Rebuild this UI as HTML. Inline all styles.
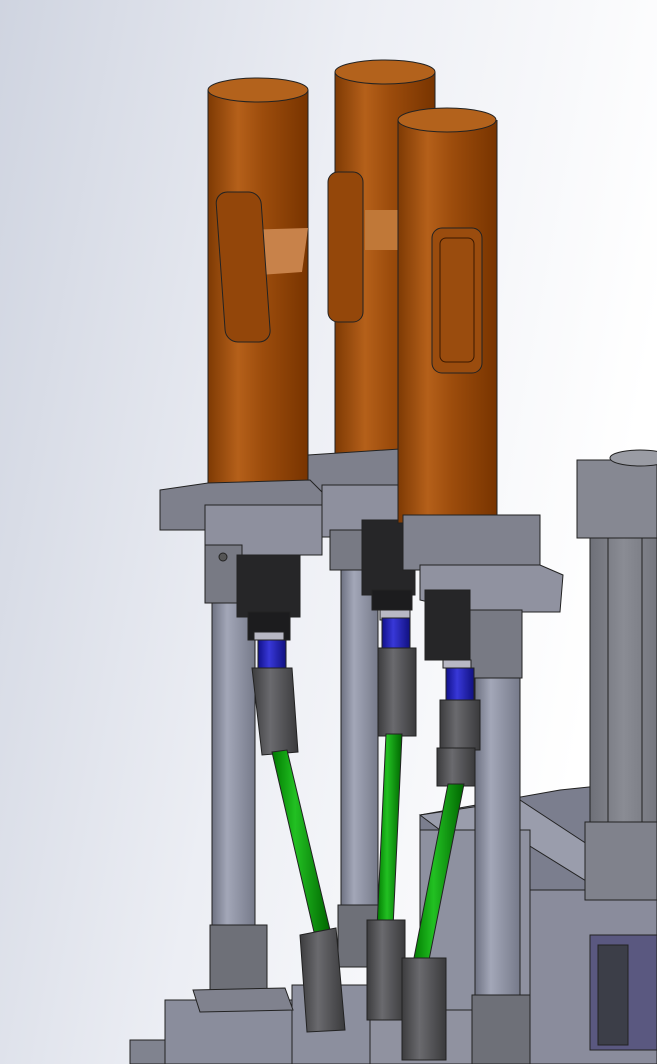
<!DOCTYPE html>
<html><head><meta charset="utf-8"><style>html,body{margin:0;padding:0;background:#fff}svg{display:block}</style></head><body>
<svg width="657" height="1064" viewBox="0 0 657 1064" xmlns="http://www.w3.org/2000/svg">
<defs>
<linearGradient id="bg" x1="0" y1="0" x2="1" y2="0.3">
<stop offset="0" stop-color="#cfd4e0"/><stop offset="0.5" stop-color="#eceef4"/><stop offset="1" stop-color="#ffffff"/></linearGradient>
<linearGradient id="cu" x1="0" x2="1" y1="0" y2="0">
<stop offset="0" stop-color="#7e3a04"/><stop offset="0.3" stop-color="#b5601a"/><stop offset="0.55" stop-color="#9c4c0c"/><stop offset="1" stop-color="#783400"/></linearGradient>
<linearGradient id="rod" x1="0" x2="1"><stop offset="0" stop-color="#6e7282"/><stop offset="0.35" stop-color="#a3a7b8"/><stop offset="1" stop-color="#767a8a"/></linearGradient>
<linearGradient id="gr" x1="0" x2="1"><stop offset="0" stop-color="#007a00"/><stop offset="0.4" stop-color="#22c022"/><stop offset="1" stop-color="#006600"/></linearGradient>
<linearGradient id="bl" x1="0" x2="1"><stop offset="0" stop-color="#10108a"/><stop offset="0.4" stop-color="#3838d8"/><stop offset="1" stop-color="#101080"/></linearGradient>
<linearGradient id="uj" x1="0" x2="1"><stop offset="0" stop-color="#3c3c3e"/><stop offset="0.4" stop-color="#6a6a6e"/><stop offset="1" stop-color="#3a3a3c"/></linearGradient>
<linearGradient id="pc" x1="0" x2="1"><stop offset="0" stop-color="#6e7078"/><stop offset="0.5" stop-color="#8a8c94"/><stop offset="1" stop-color="#74767e"/></linearGradient>
</defs>
<rect width="657" height="1064" fill="url(#bg)"/>
<g stroke="#222" stroke-width="1">
<polygon points="420,815 560,790 657,780 657,905 560,920 420,930" fill="#7b7e8e"/>
<polygon points="420,815 520,800 657,890 657,925 520,840 440,830" fill="#9a9dac"/>
<rect x="420" y="830" width="110" height="234" fill="#8e91a0"/>
<rect x="530" y="890" width="127" height="174" fill="#8a8c9c"/>
<rect x="590" y="935" width="67" height="115" fill="#5a5880"/>
<rect x="598" y="945" width="30" height="100" fill="#3c3e48"/>
<rect x="590" y="530" width="67" height="300" fill="url(#pc)"/>
<line x1="608" y1="530" x2="608" y2="830"/><line x1="642" y1="530" x2="642" y2="830"/>
<rect x="577" y="460" width="80" height="78" fill="#868892"/>
<ellipse cx="640" cy="458" rx="30" ry="8" fill="#9a9ca4"/>
<rect x="585" y="822" width="72" height="78" fill="#80828c"/>
<rect x="130" y="1040" width="60" height="24" fill="#80838f"/>
<rect x="165" y="1000" width="140" height="64" fill="#8a8d9c"/>
<rect x="292" y="985" width="110" height="79" fill="#8c8f9e"/>
<rect x="370" y="1010" width="110" height="54" fill="#9092a0"/>
<rect x="341" y="530" width="37" height="385" fill="url(#rod)"/>
<rect x="338" y="905" width="43" height="62" fill="#6e7078"/>
<rect x="212" y="595" width="43" height="335" fill="url(#rod)"/>
<rect x="210" y="925" width="57" height="65" fill="#6e7078"/>
<polygon points="193,990 285,988 293,1010 200,1012" fill="#80828e"/>
<path d="M335,72 V480 H435 V72" fill="url(#cu)"/>
<ellipse cx="385" cy="72" rx="50" ry="12" fill="#b3621c"/>
<rect x="365" y="210" width="70" height="40" fill="#c07838" stroke="none"/>
<rect x="328" y="172" width="35" height="150" rx="10" fill="#94470a"/>
<polygon points="308,455 415,448 420,500 308,505" fill="#7e808c"/>
<rect x="322" y="485" width="98" height="52" fill="#8e909e"/>
<rect x="330" y="530" width="35" height="40" fill="#787a84"/>
<rect x="362" y="520" width="53" height="75" fill="#262628"/>
<rect x="372" y="590" width="40" height="20" fill="#1c1c1e"/>
<rect x="380" y="610" width="30" height="10" fill="#b8b8c4"/>
<rect x="382" y="618" width="28" height="32" fill="url(#bl)"/>
<rect x="378" y="648" width="38" height="88" fill="url(#uj)"/>
<polygon points="386,734 402,734 393,928 377,928" fill="url(#gr)"/>
<rect x="367" y="920" width="38" height="100" fill="url(#uj)"/>
<path d="M208,90 V493 H308 V90" fill="url(#cu)"/>
<ellipse cx="258" cy="90" rx="50" ry="12" fill="#b3621c"/>
<polygon points="240,230 308,228 302,272 245,276" fill="#c8824a" stroke="none"/>
<rect x="202" y="192" width="45" height="150" rx="12" fill="#93460a" transform="skewX(4)"/>
<polygon points="160,490 208,483 310,480 322,492 322,530 160,530" fill="#7e808c"/>
<rect x="205" y="505" width="117" height="50" fill="#8e909e"/>
<rect x="205" y="545" width="37" height="58" fill="#787a84"/>
<circle cx="223" cy="557" r="4" fill="#555"/>
<rect x="237" y="555" width="63" height="62" fill="#262628"/>
<rect x="248" y="612" width="42" height="28" fill="#1c1c1e"/>
<rect x="254" y="632" width="30" height="8" fill="#b8b8c4"/>
<rect x="258" y="640" width="28" height="30" fill="url(#bl)"/>
<polygon points="252,668 292,668 298,752 262,755" fill="url(#uj)"/>
<polygon points="272,752 287,750 330,930 314,932" fill="url(#gr)"/>
<polygon points="300,935 336,928 345,1030 307,1032" fill="url(#uj)"/>
<rect x="475" y="675" width="45" height="330" fill="url(#rod)"/>
<rect x="472" y="995" width="58" height="69" fill="#6e7078"/>
<path d="M398,120 V523 H497 V120" fill="url(#cu)"/>
<ellipse cx="447" cy="120" rx="49" ry="12" fill="#b3621c"/>
<rect x="432" y="228" width="50" height="145" rx="10" fill="#9a4c0e"/>
<rect x="440" y="238" width="34" height="124" rx="6" fill="none" stroke="#3a1800"/>
<rect x="403" y="515" width="137" height="55" fill="#80828e"/>
<polygon points="420,565 540,565 563,575 560,612 470,612 420,600" fill="#9092a0"/>
<rect x="465" y="610" width="57" height="68" fill="#787a84"/>
<rect x="425" y="590" width="45" height="70" fill="#262628"/>
<rect x="443" y="660" width="28" height="8" fill="#b8b8c4"/>
<rect x="446" y="668" width="28" height="34" fill="url(#bl)"/>
<rect x="440" y="700" width="40" height="50" fill="url(#uj)"/>
<rect x="437" y="748" width="38" height="38" fill="url(#uj)"/>
<polygon points="448,784 464,784 428,965 413,963" fill="url(#gr)"/>
<rect x="402" y="958" width="44" height="102" fill="url(#uj)"/>
</g>
</svg>
</body></html>
